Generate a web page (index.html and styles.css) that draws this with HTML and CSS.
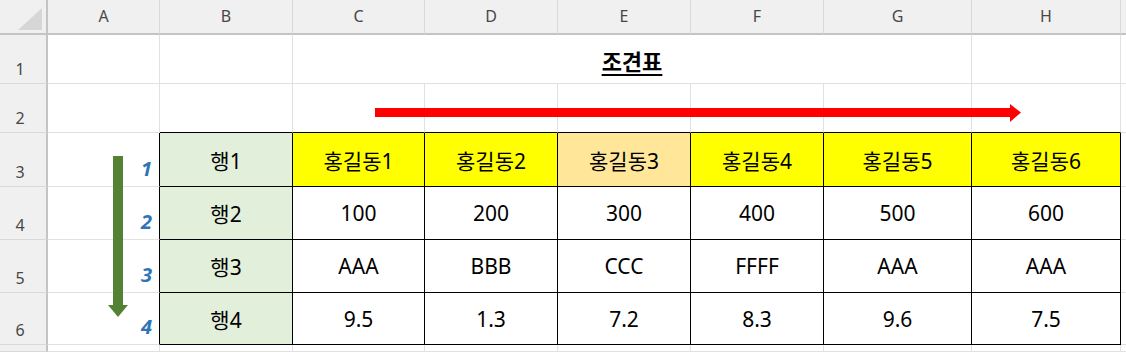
FILE: index.html
```html
<!DOCTYPE html>
<html lang="ko">
<head>
<meta charset="utf-8">
<title>조견표</title>
<link rel="stylesheet" href="styles.css">
</head>
<body>
<div class="sheet">
  <!-- header row -->
  <div class="corner"><svg class="tri" width="24" height="22" viewBox="0 0 24 22"><polygon points="24,0 24,22 0,22" fill="#d6d6d6"/></svg></div>
  <div class="colh">A</div>
  <div class="colh">B</div>
  <div class="colh">C</div>
  <div class="colh">D</div>
  <div class="colh">E</div>
  <div class="colh">F</div>
  <div class="colh">G</div>
  <div class="colh">H</div>
  <div class="colh last"></div>

  <!-- row 1 -->
  <div class="rowh">1</div>
  <div class="c"></div>
  <div class="c"></div>
  <div class="c merged"><span class="title">조견표</span></div>
  <div class="c"></div>
  <div class="c last"></div>

  <!-- row 2 -->
  <div class="rowh">2</div>
  <div class="c"></div>
  <div class="c above"></div>
  <div class="c above"></div>
  <div class="c above"></div>
  <div class="c above"></div>
  <div class="c above"></div>
  <div class="c above"></div>
  <div class="c above"></div>
  <div class="c last"></div>

  <!-- row 3 -->
  <div class="rowh">3</div>
  <div class="c left"><span class="num">1</span></div>
  <div class="t lbl">행1</div>
  <div class="t hdr">홍길동1</div>
  <div class="t hdr">홍길동2</div>
  <div class="t hdr alt">홍길동3</div>
  <div class="t hdr">홍길동4</div>
  <div class="t hdr">홍길동5</div>
  <div class="t hdr">홍길동6</div>
  <div class="c last"></div>

  <!-- row 4 -->
  <div class="rowh">4</div>
  <div class="c left"><span class="num">2</span></div>
  <div class="t lbl">행2</div>
  <div class="t">100</div>
  <div class="t">200</div>
  <div class="t">300</div>
  <div class="t">400</div>
  <div class="t">500</div>
  <div class="t">600</div>
  <div class="c last"></div>

  <!-- row 5 -->
  <div class="rowh">5</div>
  <div class="c left"><span class="num">3</span></div>
  <div class="t lbl">행3</div>
  <div class="t">AAA</div>
  <div class="t">BBB</div>
  <div class="t">CCC</div>
  <div class="t">FFFF</div>
  <div class="t">AAA</div>
  <div class="t">AAA</div>
  <div class="c last"></div>

  <!-- row 6 -->
  <div class="rowh">6</div>
  <div class="c left"><span class="num">4</span></div>
  <div class="t lbl">행4</div>
  <div class="t">9.5</div>
  <div class="t">1.3</div>
  <div class="t">7.2</div>
  <div class="t">8.3</div>
  <div class="t">9.6</div>
  <div class="t">7.5</div>
  <div class="c last"></div>

  <!-- row 7 (partial) -->
  <div class="rowh"></div>
  <div class="c"></div>
  <div class="c"></div>
  <div class="c"></div>
  <div class="c"></div>
  <div class="c"></div>
  <div class="c"></div>
  <div class="c"></div>
  <div class="c"></div>
  <div class="c last"></div>

  <!-- overlay shapes -->
  <svg class="arrow-red" width="646" height="19" viewBox="0 0 646 19">
    <rect x="0" y="4" width="637" height="9" fill="#ff0000"/>
    <polygon points="635,0 646,8.5 635,18" fill="#ff0000"/>
  </svg>
  <svg class="arrow-green" width="20" height="162" viewBox="0 0 20 162">
    <rect x="5" y="0" width="10" height="150" fill="#548235"/>
    <polygon points="0,149 20,149 10,161" fill="#548235"/>
  </svg>
</div>
</body>
</html>
```

FILE: styles.css
```css
html, body {
  margin: 0;
  padding: 0;
  background: #ffffff;
}

body {
  width: 1126px;
  height: 352px;
  overflow: hidden;
  font-family: "Noto Sans", "Noto Sans CJK KR", sans-serif;
}

.sheet {
  position: relative;
  display: grid;
  grid-template-columns: 48px 112px 133px 132px 133px 133px 133px 148px 149px 1fr;
  grid-template-rows: 35px 49px 49px 54px 53px 53px 52px 1fr;
  width: 1126px;
  height: 352px;
}

.sheet > div {
  box-sizing: border-box;
}

.corner {
  background: #f0f0f0;
  border-right: 2px solid #c4c4c4;
  border-bottom: 2px solid #c4c4c4;
  position: relative;
}

.tri {
  position: absolute;
  right: 4px;
  bottom: 3px;
}

.colh {
  background: #f0f0f0;
  border-right: 1px solid #d9d9d9;
  border-bottom: 2px solid #c4c4c4;
  display: flex;
  align-items: center;
  justify-content: center;
  font-size: 16px;
  color: #474747;
  padding-bottom: 2px;
}

.rowh {
  background: #f0f0f0;
  border-right: 2px solid #c4c4c4;
  border-bottom: 1px solid #d9d9d9;
  display: flex;
  align-items: flex-end;
  justify-content: center;
  font-size: 16px;
  color: #474747;
  padding-bottom: 3px;
  padding-right: 6px;
}

.c {
  border-right: 1px solid #e1e1e1;
  border-bottom: 1px solid #e1e1e1;
}

.c.last,
.colh.last {
  border-right: none;
}

.merged {
  grid-column: span 5;
  display: flex;
  align-items: center;
  justify-content: center;
}

.title {
  font-size: 22px;
  font-weight: bold;
  text-decoration: underline;
  text-underline-offset: 4px;
  color: #000;
  margin-top: 2px;
}

.above {
  border-bottom: 1px solid #000;
}

.left {
  border-right: 1px solid #000;
  display: flex;
  align-items: flex-end;
  justify-content: flex-end;
  padding-right: 7px;
  padding-bottom: 5px;
}

.num {
  font-size: 20px;
  font-weight: bold;
  font-style: italic;
  color: #2e75b6;
  line-height: 24px;
}

.t {
  border-right: 1px solid #000;
  border-bottom: 1px solid #000;
  display: flex;
  align-items: center;
  justify-content: center;
  font-size: 21px;
  color: #000;
  background: #ffffff;
}

.t.lbl {
  background: #e2efda;
}

.t.hdr {
  background: #ffff00;
}

.t.hdr.alt {
  background: #ffe699;
}

.arrow-red {
  position: absolute;
  left: 375px;
  top: 104px;
}

.arrow-green {
  position: absolute;
  left: 108px;
  top: 156px;
}
```
